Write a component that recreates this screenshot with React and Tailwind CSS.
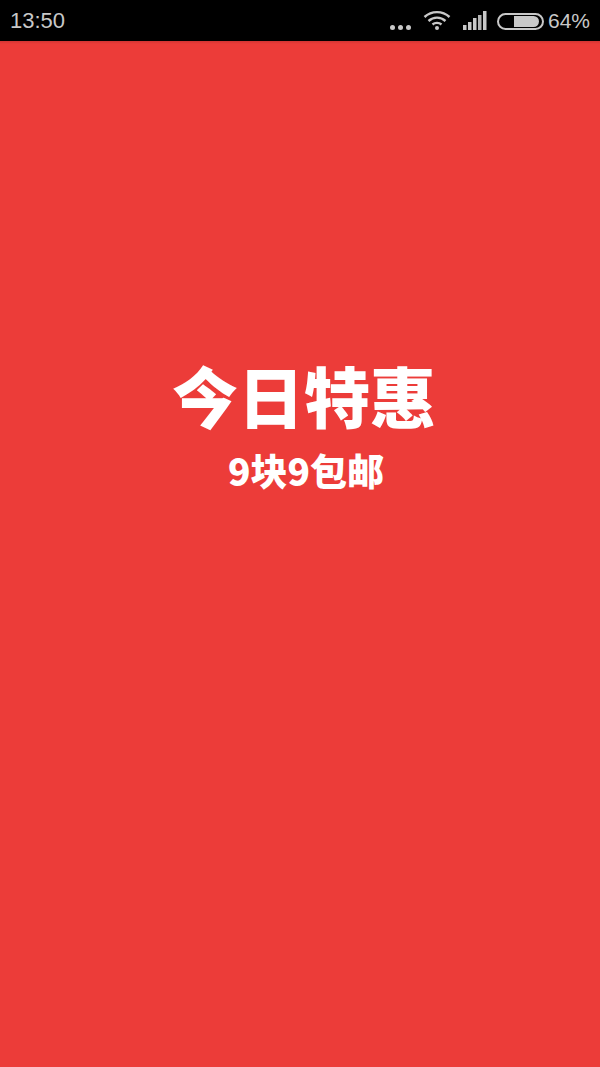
function Dots() {
  return (
    <div className="flex items-center gap-[3px] mt-[13px]">
      <span className="w-[5px] h-[5px] rounded-full bg-[#c8c8c8]" />
      <span className="w-[5px] h-[5px] rounded-full bg-[#c8c8c8]" />
      <span className="w-[5px] h-[5px] rounded-full bg-[#c8c8c8]" />
    </div>
  );
}

function Wifi() {
  return (
    <svg width="28" height="20" viewBox="0 0 28 20" fill="none" stroke="#c8c8c8" strokeWidth="2.4">
      <path d="M1.5 7 C8.5 0.5 19.5 0.5 26.5 7" />
      <path d="M5.5 11 C10.5 6.5 17.5 6.5 22.5 11" />
      <path d="M9.5 14.5 C12 12.3 16 12.3 18.5 14.5" />
      <circle cx="14" cy="18" r="2" fill="#c8c8c8" stroke="none" />
    </svg>
  );
}

function Signal() {
  return (
    <svg width="24" height="19" viewBox="0 0 24 19" fill="#c8c8c8">
      <rect x="0" y="14" width="3.5" height="5" />
      <rect x="5" y="11" width="3.5" height="8" />
      <rect x="10" y="7" width="3.5" height="12" />
      <rect x="15" y="4" width="3.5" height="15" opacity="0.9" />
      <rect x="20" y="0" width="3.5" height="19" />
    </svg>
  );
}

function Battery() {
  return (
    <div className="w-[47px] h-[17px] rounded-full border-2 border-[#c8c8c8] flex items-center justify-end pr-[3px]">
      <div className="w-[25px] h-[11px] rounded-r-full bg-[#c8c8c8]" />
    </div>
  );
}

export default function App() {
  return (
    <div className="w-[600px] h-[1067px] flex flex-col bg-[#ec3c39] font-['Noto_Sans_CJK_SC',sans-serif] overflow-hidden">
      {/* status bar */}
      <div className="h-[41px] bg-black flex items-center justify-between pl-[10px] pr-[10px] text-[#c8c8c8] text-[21px] font-['Liberation_Sans',sans-serif]">
        <span className="text-[22px]">13:50</span>
        <div className="flex items-center">
          <Dots />
          <div className="ml-[12px] mb-[1px]"><Wifi /></div>
          <div className="ml-[12px]"><Signal /></div>
          <div className="ml-[10px] mt-[1px]"><Battery /></div>
          <span className="ml-[4px]">64%</span>
        </div>
      </div>
      <div className="h-[3px] bg-gradient-to-b from-[#d23533] to-[#ec3c39]" />

      {/* splash */}
      <div className="flex flex-col items-center pt-[310px] pl-[8px] text-white">
        <div className="text-[66px] leading-[80px] font-black">今日特惠</div>
        <div className="text-[37px] leading-[44px] font-black mt-[14px] pl-[4px]">9块9包邮</div>
      </div>
    </div>
  );
}
